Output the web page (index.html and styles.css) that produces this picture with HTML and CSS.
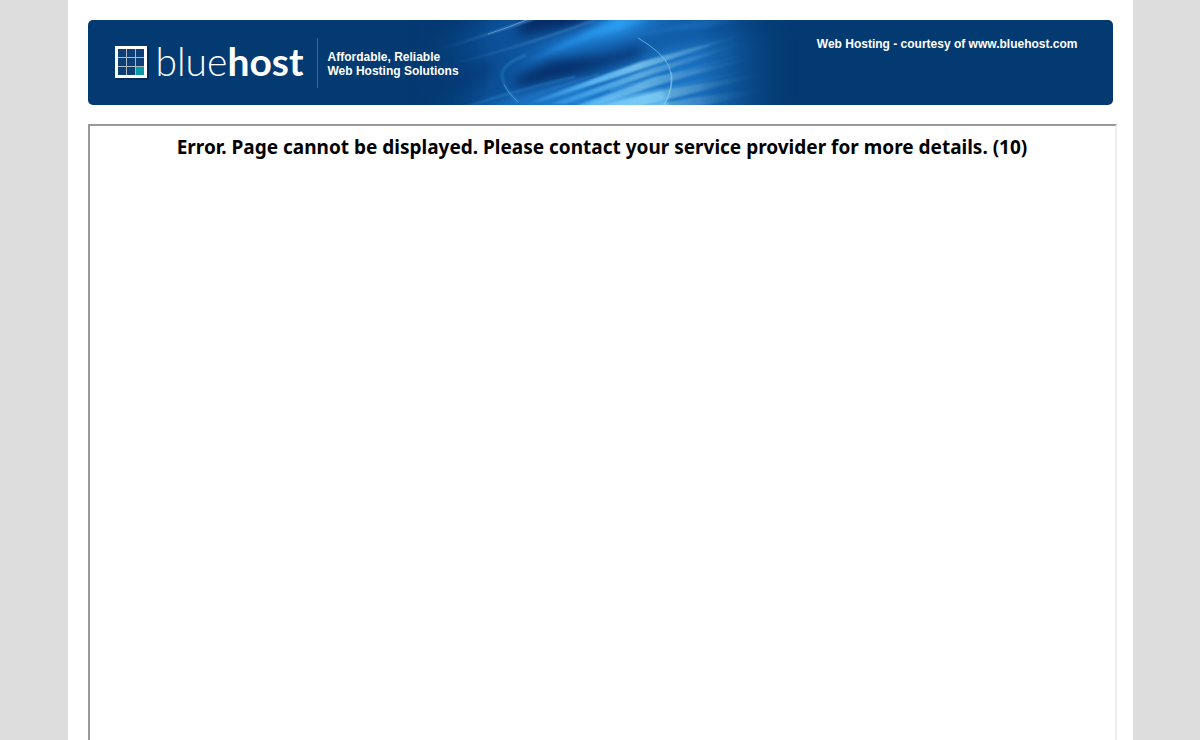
FILE: index.html
```html
<!DOCTYPE html>
<html lang="en">
<head>
    <meta charset="UTF-8">
    <meta name="viewport" content="width=device-width, initial-scale=1.0">
    <title>Web Hosting - courtesy of www.bluehost.com</title>
    <link rel="stylesheet" href="styles.css">
</head>
<body>
    <div class="page">
        <header class="banner">
            <svg class="swoosh" viewBox="0 0 400 85" aria-hidden="true">
                <defs>
                    <linearGradient id="base" x1="0" x2="1">
                        <stop offset="0" stop-color="#043a72"/>
                        <stop offset=".2" stop-color="#0b4f96"/>
                        <stop offset=".5" stop-color="#1464b2"/>
                        <stop offset=".8" stop-color="#0f58a2"/>
                        <stop offset="1" stop-color="#043a72"/>
                    </linearGradient>
                    <linearGradient id="under" gradientUnits="userSpaceOnUse" x1="50" y1="0" x2="380" y2="0">
                        <stop offset="0" stop-color="#2484d8"/>
                        <stop offset=".65" stop-color="#2484d8"/>
                        <stop offset="1" stop-color="#2484d8" stop-opacity="0"/>
                    </linearGradient>
                    <linearGradient id="glow" gradientUnits="userSpaceOnUse" x1="110" y1="85" x2="350" y2="30">
                        <stop offset="0" stop-color="#4ab4f8" stop-opacity="0"/>
                        <stop offset=".3" stop-color="#5cbcf8" stop-opacity=".9"/>
                        <stop offset=".5" stop-color="#8cd4f4" stop-opacity=".8"/>
                        <stop offset=".7" stop-color="#70b0d4" stop-opacity=".5"/>
                        <stop offset="1" stop-color="#3a8cc8" stop-opacity="0"/>
                    </linearGradient>
                    <linearGradient id="thin" gradientUnits="userSpaceOnUse" x1="90" y1="0" x2="350" y2="0">
                        <stop offset="0" stop-color="#5cb4f0" stop-opacity="0"/>
                        <stop offset=".4" stop-color="#5cb4f0"/>
                        <stop offset="1" stop-color="#5cb4f0" stop-opacity="0"/>
                    </linearGradient>
                    <linearGradient id="streak" gradientUnits="userSpaceOnUse" x1="20" y1="40" x2="120" y2="0">
                        <stop offset="0" stop-color="#3a84c4" stop-opacity="0"/>
                        <stop offset="1" stop-color="#4488c8"/>
                    </linearGradient>
                    <linearGradient id="band" gradientUnits="userSpaceOnUse" x1="80" y1="50" x2="270" y2="0">
                        <stop offset="0" stop-color="#1c78cc" stop-opacity="0"/>
                        <stop offset=".35" stop-color="#1f82d8"/>
                        <stop offset=".7" stop-color="#2c9cf0"/>
                        <stop offset="1" stop-color="#1c78cc" stop-opacity=".3"/>
                    </linearGradient>
                    <filter id="soft1" x="-20%" y="-50%" width="140%" height="200%" color-interpolation-filters="sRGB"><feGaussianBlur stdDeviation="1"/></filter>
                    <filter id="soft2" x="-20%" y="-50%" width="140%" height="200%" color-interpolation-filters="sRGB"><feGaussianBlur stdDeviation="2"/></filter>
                    <filter id="soft6" x="-30%" y="-50%" width="160%" height="200%" color-interpolation-filters="sRGB"><feGaussianBlur stdDeviation="6"/></filter>
                    <linearGradient id="fade" x1="0" x2="1">
                        <stop offset="0" stop-color="#fff" stop-opacity="0"/>
                        <stop offset=".2" stop-color="#fff"/>
                        <stop offset=".72" stop-color="#fff"/>
                        <stop offset=".97" stop-color="#fff" stop-opacity="0"/>
                    </linearGradient>
                    <mask id="edge"><rect width="400" height="85" fill="url(#fade)"/></mask>
                </defs>
                <g mask="url(#edge)">
                    <rect width="400" height="85" fill="url(#base)"/>
                    <!-- shadows -->
                    <g filter="url(#soft6)" fill="#062c66">
                        <path d="M0 -8 H100 L60 4 L10 16 Z" opacity=".5"/>
                        <path d="M118 -14 H205 L165 7 L105 16 Z"/>
                        <path d="M104 60 L140 40 L190 36 L235 26 L230 36 L160 58 L110 68 Z" opacity=".9"/>
                        <path d="M0 76 L50 46 L86 40 L80 58 L50 72 Z" opacity=".4"/>
                    </g>
                    <!-- upper bands -->
                    <path d="M95 52 Q130 26 175 10 L205 -6 H275 L235 10 Q170 24 95 52 Z" fill="url(#band)" filter="url(#soft6)" opacity=".8"/>
                    <path d="M112 44 Q160 19 210 -2 H245 Q175 18 112 44 Z" fill="url(#band)" filter="url(#soft2)"/>
                    <path d="M205 22 Q260 2 330 -4 L300 8 Q250 10 205 22 Z" fill="#2a86d4" opacity=".3" filter="url(#soft2)"/>
                    <g fill="none" stroke="url(#streak)" filter="url(#soft1)">
                        <path d="M22 32 Q80 14 125 -2" stroke-width="2"/>
                        <path d="M50 42 Q120 24 185 0" stroke-width="2" opacity=".6"/>
                    </g>
                    <path d="M78 14 Q98 8 116 0" fill="none" stroke="#91bfe4" stroke-opacity=".5"/>
                    <!-- lower rays -->
                    <g fill="url(#under)" filter="url(#soft6)">
                        <path d="M110 96 L190 62 L255 30 L320 16 L380 20 L380 70 L340 96 Z" opacity=".6"/>
                        <path d="M50 96 L110 74 L170 60 L190 92 Z" opacity=".6"/>
                    </g>
                    <g fill="url(#glow)" filter="url(#soft1)">
                        <path d="M120 82 L230 42 L340 12 L250 43 L130 82 Z"/>
                        <path d="M140 84 L242 48 L350 18 L250 52 L155 84 Z" opacity=".7"/>
                        <path d="M165 86 L245 57 L360 34 L258 62 L180 87 Z" opacity=".8"/>
                        <path d="M180 88 L258 69 L370 50 L268 77 L205 92 Z"/>
                        <path d="M205 92 L280 78 L380 64 L290 87 Z" opacity=".8"/>
                    </g>
                    <path d="M155 92 L200 77 L252 70 L262 92 Z" fill="#7cd0fa" opacity=".6" filter="url(#soft2)"/>
                    <g fill="none" stroke="url(#thin)" stroke-opacity=".5" filter="url(#soft1)">
                        <path d="M100 84 Q140 68 190 54"/>
                        <path d="M120 84 L205 52"/>
                        <path d="M180 62 L300 25" stroke-width="2"/>
                        <path d="M200 70 L330 36" stroke-width="2"/>
                        <path d="M220 76 L350 48" stroke-width="2"/>
                    </g>
                    <path d="M50 89 Q105 70 165 57" fill="none" stroke="#2a84cc" stroke-opacity=".6" stroke-width="2" filter="url(#soft1)"/>
                    <!-- rings -->
                    <g fill="none">
                        <path d="M116 35 Q92 44 92 55 Q93 68 108 82" stroke="#3a8ed0" stroke-width="2" stroke-opacity=".5" filter="url(#soft1)"/>
                        <path d="M94 65 Q98 73 108 82" stroke="#5aaee0" stroke-opacity=".6"/>
                        <path d="M228 18 Q252 32 259 46 Q266 64 254 85" stroke="#85cbea" stroke-opacity=".7"/>
                        <path d="M261 52 Q264 68 254 85" stroke="#85cbea" stroke-width="2" stroke-opacity=".4"/>
                    </g>
                </g>
            </svg>
            <a class="brand" href="#">
                <svg class="brand-icon" viewBox="0 0 38 38" aria-hidden="true">
                    <rect x="3" y="4" width="33" height="33" fill="#021f48" opacity=".55"/>
                    <rect x="2" y="3" width="32" height="32" fill="#fff"/>
                    <rect x="5" y="6" width="26" height="26" fill="#a9b7c6"/>
                    <path d="M5 6h8v8H5zM14 6h8v8h-8zM23 6h8v8h-8zM5 15h8v8H5zM14 15h8v8h-8zM23 15h8v8h-8zM5 24h8v8H5zM14 24h8v8h-8z" fill="#0d3f74"/>
                    <path d="M23 24h8v8h-8z" fill="#0b9aa5"/>
                </svg>
                <span class="brand-name">blue<b>host</b></span>
            </a>
            <p class="tagline">Affordable, Reliable<br>Web Hosting Solutions</p>
            <a class="courtesy" href="#">Web Hosting - courtesy of www.bluehost.com</a>
        </header>
        <main class="frame">
            <h1>Error. Page cannot be displayed. Please contact your service provider for more details. (10)</h1>
        </main>
    </div>
</body>
</html>
```
FILE: styles.css
```css
body {
    margin: 0;
    background-color: #ddd;
    font-family: Arial, "Liberation Sans", sans-serif;
}
.page {
    display: flex;
    flex-direction: column;
    box-sizing: border-box;
    max-width: 1065px;
    min-height: 100vh;
    margin: 0 auto;
    padding: 20px 20px 0;
    background-color: #fff;
}
.banner {
    position: relative;
    display: flex;
    align-items: flex-start;
    box-sizing: border-box;
    height: 85px;
    margin-bottom: 19px;
    padding: 17px 35px 0 25px;
    border-radius: 5px;
    background-color: #043a72;
    color: #fff;
    font-size: 12px;
    font-weight: bold;
    line-height: 14px;
    overflow: hidden;
}
.swoosh {
    position: absolute;
    top: 0;
    left: 322px;
    width: 400px;
    height: 85px;
}
.brand {
    display: flex;
    align-items: center;
    width: 204px;
    height: 50px;
    color: #fff;
    text-decoration: none;
}
.brand-icon {
    width: 38px;
    height: 38px;
    margin-right: 5px;
}
.brand-name {
    padding-bottom: 2px;
    font-family: Lato, sans-serif;
    font-size: 39px;
    font-weight: 300;
    line-height: 48px;
}
.brand-name b {
    font-weight: 700;
}
.tagline {
    position: relative;
    margin: 1px 0 0;
    padding: 12px 0 10px 10px;
    border-left: 1px solid #2a6ca8;
}
.courtesy {
    position: relative;
    margin-left: auto;
    color: #fff;
    text-decoration: none;
}
.frame {
    flex: 1;
    width: 100%;
    border: 2px solid;
    border-color: #999 #eee #eee #999;
    border-bottom: 0;
}
h1 {
    margin: 8px;
    font-family: "Noto Sans", "Open Sans", sans-serif;
    font-size: 19px;
    font-weight: bold;
    line-height: 27px;
    text-align: center;
    color: #000;
}
```
